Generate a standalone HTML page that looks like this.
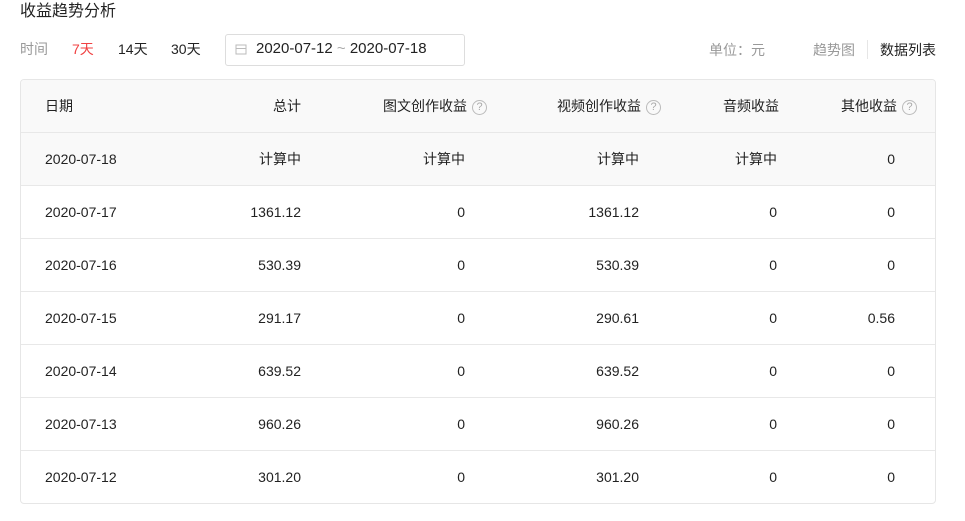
<!DOCTYPE html>
<html><head><meta charset="utf-8"><style>
*{margin:0;padding:0;box-sizing:border-box}
body{width:965px;height:521px;background:#fff;font-family:"Liberation Sans","Noto Sans CJK SC",sans-serif;font-size:14px;color:#222;position:relative;overflow:hidden}
.a{position:absolute;white-space:nowrap;line-height:20px}
.r{text-align:right}
.tbl{position:absolute;left:20px;top:79px;width:916px;height:425px;border:1px solid #e6e6e6;border-radius:4px;overflow:hidden}
.row{position:absolute;left:0;width:100%;height:53px;border-bottom:1px solid #e8e8e8}
.row .a{top:16px}
.q{display:inline-block;width:15px;height:15px;border:1px solid #bbb;border-radius:50%;font-size:11px;line-height:13px;text-align:center;color:#aaa;vertical-align:1px;margin-left:5px}
</style></head><body>
<div class="a" style="left:20px;top:1px;font-size:16px;line-height:22px;color:#222">收益趋势分析</div>
<div class="a" style="left:20px;top:39px;color:#999">时间</div>
<div class="a" style="left:72px;top:39px;color:#f04142">7天</div>
<div class="a" style="left:118px;top:39px">14天</div>
<div class="a" style="left:171px;top:39px">30天</div>
<div style="position:absolute;left:225px;top:34px;width:240px;height:32px;border:1px solid #ddd;border-radius:3px"></div>
<svg style="position:absolute;left:235px;top:43px" width="12" height="12" viewBox="0 0 12 12"><rect x="1" y="2" width="10" height="9" fill="none" stroke="#bbb"/><line x1="1" y1="5.5" x2="11" y2="5.5" stroke="#bbb"/></svg>
<div class="a" style="left:256px;top:39px;font-size:15px">2020-07-12 <span style="color:#aaa">~</span> 2020-07-18</div>
<div class="a" style="left:709px;top:40px;color:#999">单位：元</div>
<div class="a" style="left:813px;top:40px;color:#999">趋势图</div>
<div style="position:absolute;left:867px;top:40px;width:1px;height:19px;background:#e6e6e6"></div>
<div class="a" style="left:880px;top:40px">数据列表</div>
<div class="tbl">
<div class="row" style="top:0;background:#f9f9f9">
<div class="a" style="left:24px">日期</div>
<div class="a r" style="right:634px">总计</div>
<div class="a" style="left:362px">图文创作收益<span class="q">?</span></div>
<div class="a" style="left:536px">视频创作收益<span class="q">?</span></div>
<div class="a r" style="right:156px">音频收益</div>
<div class="a" style="left:820px">其他收益<span class="q">?</span></div>
</div>
<div class="row" style="top:53px;background:#f9f9f9"><div class="a" style="left:24px">2020-07-18</div><div class="a r" style="right:634px">计算中</div><div class="a r" style="right:470px">计算中</div><div class="a r" style="right:296px">计算中</div><div class="a r" style="right:158px">计算中</div><div class="a r" style="right:40px">0</div></div>
<div class="row" style="top:106px"><div class="a" style="left:24px">2020-07-17</div><div class="a r" style="right:634px">1361.12</div><div class="a r" style="right:470px">0</div><div class="a r" style="right:296px">1361.12</div><div class="a r" style="right:158px">0</div><div class="a r" style="right:40px">0</div></div>
<div class="row" style="top:159px"><div class="a" style="left:24px">2020-07-16</div><div class="a r" style="right:634px">530.39</div><div class="a r" style="right:470px">0</div><div class="a r" style="right:296px">530.39</div><div class="a r" style="right:158px">0</div><div class="a r" style="right:40px">0</div></div>
<div class="row" style="top:212px"><div class="a" style="left:24px">2020-07-15</div><div class="a r" style="right:634px">291.17</div><div class="a r" style="right:470px">0</div><div class="a r" style="right:296px">290.61</div><div class="a r" style="right:158px">0</div><div class="a r" style="right:40px">0.56</div></div>
<div class="row" style="top:265px"><div class="a" style="left:24px">2020-07-14</div><div class="a r" style="right:634px">639.52</div><div class="a r" style="right:470px">0</div><div class="a r" style="right:296px">639.52</div><div class="a r" style="right:158px">0</div><div class="a r" style="right:40px">0</div></div>
<div class="row" style="top:318px"><div class="a" style="left:24px">2020-07-13</div><div class="a r" style="right:634px">960.26</div><div class="a r" style="right:470px">0</div><div class="a r" style="right:296px">960.26</div><div class="a r" style="right:158px">0</div><div class="a r" style="right:40px">0</div></div>
<div class="row" style="top:371px;border-bottom:none"><div class="a" style="left:24px">2020-07-12</div><div class="a r" style="right:634px">301.20</div><div class="a r" style="right:470px">0</div><div class="a r" style="right:296px">301.20</div><div class="a r" style="right:158px">0</div><div class="a r" style="right:40px">0</div></div>
</div>
</body></html>
